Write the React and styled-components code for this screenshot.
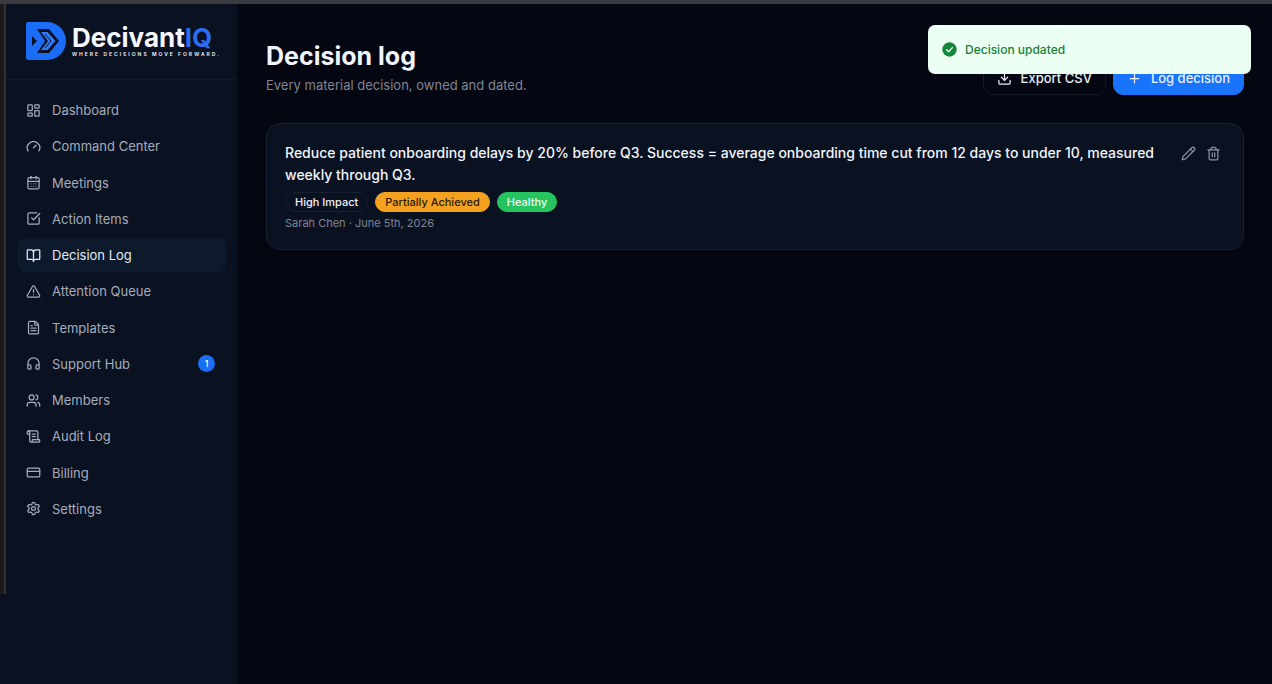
import React from "react";
import styled, { createGlobalStyle } from "styled-components";
import {
  LayoutDashboard, Gauge, CalendarDays, SquareCheckBig, BookOpen, TriangleAlert,
  FileText, Headphones, Users, ScrollText, CreditCard, Settings,
  Download, Plus, Pencil, Trash2,
} from "lucide-react";

const GlobalStyle = createGlobalStyle`
  *, *::before, *::after { box-sizing: border-box; }
  html, body, #root { min-height: 100%; }
  body {
    margin: 0;
    background: #040611;
    color: #f1f5fd;
    font-family: Inter, "Liberation Sans", sans-serif;
    font-size: 13px;
  }
  h1, h2, p, ul { margin: 0; padding: 0; }
  button { font: inherit; cursor: pointer; }
`;

const Shell = styled.div`
  display: flex;
  min-height: 100vh;
  border-top: 4px solid #3a3b40;
`;

const Sidebar = styled.aside`
  position: relative;
  flex: 0 0 238px;
  padding-left: 6px;
  background: #0a1120;
  border-right: 1px solid #060a14;
`;

const WindowEdge = styled.span`
  position: absolute;
  top: 0;
  bottom: 90px;
  left: 0;
  width: 6px;
  background: #1a191b;
  border-right: 2px solid #313136;
`;

const Brand = styled.a`
  display: flex;
  align-items: center;
  gap: 6px;
  height: 76px;
  padding: 0 0 2px 20px;
  border-bottom: 1px solid #121a2b;
  color: #f6f8ff;
  text-decoration: none;
`;

const BrandText = styled.span`
  display: flex;
  flex-direction: column;
`;

const Wordmark = styled.span`
  font-size: 26px;
  line-height: 26px;
  font-weight: 700;
  span { color: #2b6cf0; }
`;

const Tagline = styled.span`
  font-size: 5px;
  line-height: 6px;
  font-weight: 600;
  letter-spacing: 2px;
  white-space: nowrap;
`;

const NavList = styled.ul`
  display: grid;
  grid-template-rows: repeat(12, 1fr);
  gap: 2px;
  min-height: 433px;
  margin: 13px 11px 0 12px;
  list-style: none;
`;

const NavLink = styled.a`
  display: flex;
  align-items: center;
  gap: 11px;
  height: 100%;
  padding: 0 11px 0 8px;
  border-radius: 8px;
  background: ${(p) => (p.$active ? "#0d1a2b" : "transparent")};
  color: ${(p) => (p.$active ? "#e3eaf6" : "#a5adbd")};
  text-decoration: none;
`;

const Count = styled.span`
  margin-left: auto;
  width: 17px;
  height: 17px;
  border-radius: 9px;
  background: #1a6ff5;
  color: #fff;
  font-size: 9px;
  line-height: 17px;
  font-weight: 500;
  text-align: center;
`;

const Main = styled.main`
  flex: 1;
  min-width: 0;
  padding: 36px 28px;
`;

const PageHeader = styled.header`
  display: flex;
  justify-content: space-between;
  align-items: flex-end;
  margin-bottom: 28px;
`;

const Title = styled.h1`
  font-size: 25px;
  line-height: 32px;
  font-weight: 700;
`;

const Subtitle = styled.p`
  margin-top: 3px;
  line-height: 20px;
  color: #7f8694;
`;

const Actions = styled.div`
  display: flex;
  gap: 7px;
`;

const Button = styled.button`
  display: flex;
  align-items: center;
  gap: 9px;
  height: 34px;
  padding: 0 13px;
  border-radius: 10px;
  border: 1px solid ${(p) => (p.$primary ? "#1a73fb" : "#171b27")};
  background: ${(p) => (p.$primary ? "#1a73fb" : "#040611")};
  color: ${(p) => (p.$primary ? "#e6f0ff" : "#e9edf6")};
  font-weight: 500;
  white-space: nowrap;
`;

const Card = styled.article`
  display: flex;
  align-items: flex-start;
  gap: 24px;
  padding: 18px;
  border: 1px solid #1a2130;
  border-radius: 14px;
  background: #0a1120;
`;

const CardBody = styled.div`
  flex: 1;
  min-width: 0;
`;

const DecisionText = styled.h2`
  font-size: 14px;
  line-height: 22px;
  font-weight: 500;
`;

const Badges = styled.div`
  display: flex;
  gap: 7px;
  margin-top: 6px;
`;

const tones = {
  outline: ["#0a1120", "#182030", "#eef2fa"],
  warning: ["#f3a11f", "#f3a11f", "#2b1a06"],
  success: ["#25c45f", "#25c45f", "#effff4"],
};

const Badge = styled.span`
  padding: 0 9px;
  border: 1px solid ${(p) => tones[p.$tone][1]};
  border-radius: 10px;
  background: ${(p) => tones[p.$tone][0]};
  color: ${(p) => tones[p.$tone][2]};
  font-size: 11px;
  line-height: 18px;
  font-weight: 500;
  white-space: nowrap;
`;

const Meta = styled.p`
  margin-top: 3px;
  font-size: 11px;
  line-height: 16px;
  color: #7f8694;
`;

const CardActions = styled.div`
  display: flex;
  gap: 10px;
  padding: 4px 4px 0 0;
`;

const IconButton = styled.button`
  display: flex;
  padding: 0;
  border: 0;
  background: none;
  color: #8a91a1;
`;

const Toast = styled.div`
  position: fixed;
  top: 25px;
  right: 21px;
  display: flex;
  align-items: center;
  gap: 8px;
  width: 323px;
  height: 49px;
  padding: 0 14px;
  border-radius: 7px;
  background: #ebfff3;
  color: #1c8038;
  font-size: 12px;
  font-weight: 500;
`;

const navItems = [
  { label: "Dashboard", icon: LayoutDashboard },
  { label: "Command Center", icon: Gauge },
  { label: "Meetings", icon: CalendarDays },
  { label: "Action Items", icon: SquareCheckBig },
  { label: "Decision Log", icon: BookOpen, active: true },
  { label: "Attention Queue", icon: TriangleAlert },
  { label: "Templates", icon: FileText },
  { label: "Support Hub", icon: Headphones, count: 1 },
  { label: "Members", icon: Users },
  { label: "Audit Log", icon: ScrollText },
  { label: "Billing", icon: CreditCard },
  { label: "Settings", icon: Settings },
];

const LogoMark = () => (
  <svg width="40" height="38" viewBox="0 0 40 38" aria-hidden="true">
    <path d="M2 0H21a19 19 0 0 1 0 38H2a2 2 0 0 1-2-2V2a2 2 0 0 1 2-2Z" fill="#1b6cf6" />
    <path d="M6 14l5 5-5 5Z" fill="#0a1120" />
    <path d="M11 7H23L33 19 23 31H11L19 19Z" fill="#0a1120" />
    <path d="M15 10H21.500L29.500 19 21.500 28H15L22 19Z" fill="#2f7bf8" />
    <path d="M19 12L25 19 19 26" fill="none" stroke="#0a1120" strokeWidth="1" />
  </svg>
);

const CheckMark = () => (
  <svg width="15" height="15" viewBox="0 0 15 15" aria-hidden="true">
    <circle cx="7.5" cy="7.5" r="7.2" fill="#11873a" />
    <path d="M4.6 7.8l2 2 3.8-4.2" fill="none" stroke="#ebfff3" strokeWidth="1.4" strokeLinecap="round" strokeLinejoin="round" />
  </svg>
);

export default function App() {
  return (
    <>
      <GlobalStyle />
      <Shell>
        <Sidebar>
          <Brand href="#">
            <LogoMark />
            <BrandText>
              <Wordmark>Decivant<span>IQ</span></Wordmark>
              <Tagline>WHERE DECISIONS MOVE FORWARD.</Tagline>
            </BrandText>
          </Brand>
          <nav aria-label="Main">
            <NavList>
              {navItems.map(({ label, icon: Icon, active, count }) => (
                <li key={label}>
                  <NavLink href="#" $active={active} aria-current={active ? "page" : undefined}>
                    <Icon size={15} strokeWidth={2} />
                    {label}
                    {count && <Count>{count}</Count>}
                  </NavLink>
                </li>
              ))}
            </NavList>
          </nav>
          <WindowEdge />
        </Sidebar>
        <Main>
          <PageHeader>
            <div>
              <Title>Decision log</Title>
              <Subtitle>Every material decision, owned and dated.</Subtitle>
            </div>
            <Actions>
              <Button><Download size={15} />Export CSV</Button>
              <Button $primary><Plus size={15} />Log decision</Button>
            </Actions>
          </PageHeader>
          <Card>
            <CardBody>
              <DecisionText>
                Reduce patient onboarding delays by 20% before Q3. Success = average onboarding time cut from 12 days to under 10, measured weekly through Q3.
              </DecisionText>
              <Badges>
                <Badge $tone="outline">High Impact</Badge>
                <Badge $tone="warning">Partially Achieved</Badge>
                <Badge $tone="success">Healthy</Badge>
              </Badges>
              <Meta>Sarah Chen · June 5th, 2026</Meta>
            </CardBody>
            <CardActions>
              <IconButton aria-label="Edit decision"><Pencil size={15} /></IconButton>
              <IconButton aria-label="Delete decision"><Trash2 size={15} /></IconButton>
            </CardActions>
          </Card>
        </Main>
      </Shell>
      <Toast role="status"><CheckMark />Decision updated</Toast>
    </>
  );
}
